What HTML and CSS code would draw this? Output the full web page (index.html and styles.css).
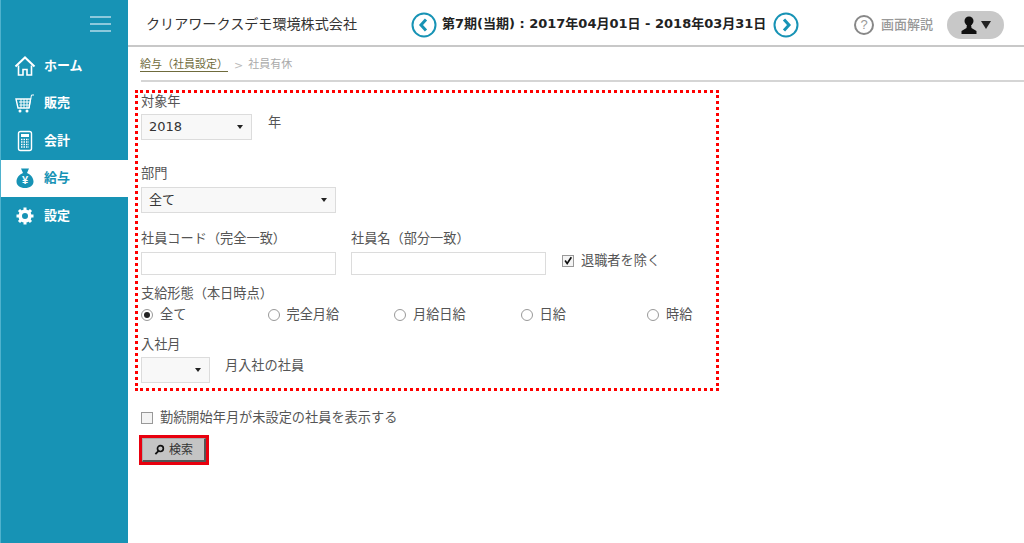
FILE: index.html
```html
<!DOCTYPE html>
<html lang="ja">
<head>
<meta charset="utf-8">
<title>社員有休</title>
<link rel="stylesheet" href="styles.css">
</head>
<body>
<div class="app">
  <aside class="side">
    <div class="burger"><span></span><span></span><span></span></div>
    <nav class="menu">
      <a class="item">
        <svg class="ico" viewBox="0 0 22 22"><path d="M1.500 11.500 11 2.500l9.500 9" fill="none" stroke="#fff" stroke-width="2"/><path d="M4.500 10.500V20h4.500v-5.500h4V20h4.500v-9.500" fill="none" stroke="#fff" stroke-width="1.600"/></svg>
        <span>ホーム</span>
      </a>
      <a class="item">
        <svg class="ico" viewBox="0 0 22 22"><path d="M2 7h14.500l-1.500 9H4z" fill="none" stroke="#fff" stroke-width="1.400"/><path d="M5 10h10.500M5.500 13h9.500M7 7v9M10 7v9M13 7v9M15 16l2.500-13H20" fill="none" stroke="#fff" stroke-width="1"/><circle cx="6" cy="19" r="1.500" fill="#fff"/><circle cx="13" cy="19" r="1.500" fill="#fff"/></svg>
        <span>販売</span>
      </a>
      <a class="item">
        <svg class="ico" viewBox="0 0 22 22"><rect x="4.500" y="1.500" width="13" height="19" rx="2" fill="none" stroke="#fff" stroke-width="1.400"/><rect x="7" y="4" width="8" height="3" fill="#fff"/><path d="M7 9.500h8M7 12h8M7 14.500h8M7 17h8" stroke="#fff" stroke-width="1.300" stroke-dasharray="1.500 1"/></svg>
        <span>会計</span>
      </a>
      <a class="item active">
        <svg class="ico" viewBox="0 0 22 22"><path d="M7 1.500h8l-2 4.500c4 1.500 6.500 5 6.500 8.500 0 4-3.500 6.500-8.500 6.500s-8.500-2.500-8.500-6.500c0-3.500 2.500-7 6.500-8.500z" fill="#1793b5"/><text x="11" y="17" class="yen">¥</text></svg>
        <span>給与</span>
      </a>
      <a class="item">
        <svg class="ico" viewBox="0 0 22 22"><circle cx="11" cy="11" r="4.800" fill="none" stroke="#fff" stroke-width="3.600"/><path d="M11 2.500v3M11 16.500v3M2.500 11h3M16.500 11h3M5 5l2.100 2.100M14.900 14.900 17 17M17 5l-2.100 2.100M7.100 14.900 5 17" stroke="#fff" stroke-width="3"/></svg>
        <span>設定</span>
      </a>
    </nav>
  </aside>
  <div class="main">
    <header class="top">
      <div class="company">クリアワークスデモ環境株式会社</div>
      <div class="period">
        <svg class="arrow" viewBox="0 0 26 26"><circle cx="13" cy="13" r="11.500" fill="#fff" stroke="#1793b5" stroke-width="2"/><path d="M15 7.500 10 13l5 5.500" fill="none" stroke="#1793b5" stroke-width="3"/></svg>
        <span class="period-text">第7期(当期) : 2017年04月01日 - 2018年03月31日</span>
        <svg class="arrow next" viewBox="0 0 26 26"><circle cx="13" cy="13" r="11.500" fill="#fff" stroke="#1793b5" stroke-width="2"/><path d="M11 7.500 16 13l-5 5.500" fill="none" stroke="#1793b5" stroke-width="3"/></svg>
      </div>
      <div class="help">
        <span class="qmark">?</span>
        <span>画面解説</span>
      </div>
      <div class="user">
        <svg class="user-ico" viewBox="0 0 16 18"><circle cx="8" cy="5" r="4.500" fill="#111"/><path d="M6 8h4l.5 4 5 3v3H.5v-3l5-3z" fill="#111"/></svg>
        <span class="user-caret"></span>
      </div>
    </header>
    <div class="crumbs">
      <a class="crumb-link">給与（社員設定）</a>
      <span class="crumb-sep">&gt;</span>
      <span class="crumb-now">社員有休</span>
    </div>
    <section class="filter">
      <div class="label">対象年</div>
      <div class="row year-row">
        <div class="select w-year"><span>2018</span><i class="caret"></i></div>
        <span class="unit year-unit">年</span>
      </div>
      <div class="label">部門</div>
      <div class="select w-dept"><span>全て</span><i class="caret"></i></div>
      <div class="two">
        <div class="col">
          <div class="label">社員コード（完全一致）</div>
          <div class="input"></div>
        </div>
        <div class="col">
          <div class="label">社員名（部分一致）</div>
          <div class="input"></div>
        </div>
        <label class="check retired"><i class="box"><svg viewBox="0 0 12 12"><path d="M2.500 5.500 5 9l5-7.500" fill="none" stroke="#111" stroke-width="2"/></svg></i>退職者を除く</label>
      </div>
      <div class="label pay-label">支給形態（本日時点）</div>
      <div class="radios">
        <label class="radio"><i class="dot on"></i>全て</label>
        <label class="radio"><i class="dot"></i>完全月給</label>
        <label class="radio"><i class="dot"></i>月給日給</label>
        <label class="radio"><i class="dot"></i>日給</label>
        <label class="radio"><i class="dot"></i>時給</label>
      </div>
      <div class="label join-label">入社月</div>
      <div class="row join-row">
        <div class="select w-month"><span></span><i class="caret"></i></div>
        <span class="unit join-unit">月入社の社員</span>
      </div>
    </section>
    <label class="check unset"><i class="box"></i>勤続開始年月が未設定の社員を表示する</label>
    <div class="btn-ring">
      <div class="btn">
        <svg class="lens" viewBox="0 0 12 12"><circle cx="7" cy="5" r="3.200" fill="none" stroke="#111" stroke-width="1.800"/><path d="M5 7.500 1.500 11" stroke="#111" stroke-width="2"/></svg>
        <span>検索</span>
      </div>
    </div>
  </div>
</div>
</body>
</html>
```
FILE: styles.css
```css
* { box-sizing: border-box; }
html, body { margin: 0; height: 100%; overflow: hidden; }
body {
  background: #fff;
  color: #555;
  font: 13.200px/18px "DejaVu Sans", "Noto Sans CJK JP", sans-serif;
}
.app { display: flex; height: 543px; }

/* sidebar */
.side {
  width: 128px;
  flex: none;
  background: #1793b5;
  border-left: 1px solid #4fb2cd;
}
.burger {
  height: 47px;
  padding: 16px 17px 0 89px;
  display: flex;
  flex-direction: column;
  gap: 5px;
}
.burger span { display: block; height: 2px; width: 21px; background: #8cc9dc; }
.menu { display: flex; flex-direction: column; }
.item {
  height: 37.500px;
  display: flex;
  align-items: center;
  gap: 8px;
  padding: 0 0 0 13px;
  color: #fff;
  font-size: 13px;
  font-weight: 700;
}
.item.active { background: #fff; color: #1793b5; }
.ico { width: 22px; height: 22px; flex: none; }
.yen { fill: #fff; font-size: 11px; font-weight: 700; text-anchor: middle; font-family: "Liberation Sans", sans-serif; }

/* header */
.main { flex: 1; min-width: 0; }
.top {
  height: 47px;
  border-bottom: 2px solid #c8c8c8;
  display: flex;
  align-items: center;
  padding: 2px 20px 0 18px;
}
.company { width: 265px; flex: none; font-size: 14.100px; color: #333; }
.period { display: flex; align-items: center; gap: 5px; width: 392px; flex: none; }
.arrow { width: 26px; height: 26px; flex: none; margin-top: 2px; }
.arrow.next { margin-left: 2px; }
.period-text { font-size: 13px; font-weight: 700; color: #222; white-space: nowrap; margin-top: 1px; }
.help { display: flex; align-items: center; gap: 7px; margin-left: 51px; margin-top: 2px; font-size: 13px; font-weight: 500; color: #999; white-space: nowrap; }
.qmark {
  width: 20px; height: 20px;
  border: 2px solid #888;
  border-radius: 50%;
  display: flex; align-items: center; justify-content: center;
  font: 13px/1 "Liberation Sans", sans-serif;
}
.user {
  margin-left: auto;
  margin-top: 2px;
  width: 57px; height: 28px;
  background: #c8c8c8;
  border-radius: 14px;
  display: flex;
  align-items: center;
  padding-left: 14px;
  gap: 4px;
}
.user-ico { width: 16px; height: 18px; }
.user-caret { border: 5px solid transparent; border-top: 8px solid #222; border-bottom: 0; }

/* breadcrumbs */
.crumbs {
  height: 35px;
  margin-left: 13px;
  border-bottom: 2px solid #d5d5d5;
  display: flex;
  align-items: center;
  font-size: 11px;
}
.crumb-link { color: #6f6b3c; border-bottom: 1px solid #6f6b3c; line-height: 13px; margin-top: 3px; margin-left: -1px; }
.crumb-sep { color: #bbb; margin: 4px 5px 0 6px; }
.crumb-now { color: #aaa; font-size: 11px; margin-top: 3px; }

/* filter box */
.filter {
  width: 584px;
  height: 301px;
  margin: 8px 0 0 7px;
  padding: 0 3px;
  border: 3px dotted #f00;
}
.label { height: 16px; line-height: 18px; color: #555; }
.row { display: flex; }
.select {
  height: 26px;
  border: 1px solid #dcdcdc;
  background: #f8f8f8;
  display: flex;
  align-items: center;
  justify-content: space-between;
  padding: 0 7px;
  color: #333;
  font-size: 13px;
}
.year-row { margin-top: 5px; height: 51px; }
.w-year { width: 111px; }
.w-dept { width: 195px; margin-top: 6px; }
.w-month { width: 69px; }
.caret { border: 3px solid transparent; border-top: 4px solid #222; border-bottom: 0; margin-right: 1px; }
.unit { line-height: 18px; color: #555; }
.year-unit { margin-left: 16px; }
.join-unit { margin-left: 15px; }

.two { display: flex; margin-top: 17px; }
.col { width: 195px; margin-right: 15px; }
.col .label { margin-bottom: 6px; }
.input { height: 23px; border: 1px solid #dcdcdc; background: #fff; }
.check { display: flex; align-items: center; gap: 7px; color: #555; }
.box {
  width: 12px; height: 12px;
  border: 1px solid #999;
  background: #f4f4f4;
  display: block;
  flex: none;
}
.box svg { display: block; width: 10px; height: 10px; }
.retired { margin-top: 22px; height: 18px; align-self: flex-start; margin-left: 1px; }
.pay-label { margin-top: 10px; }
.radios { display: grid; grid-template-columns: repeat(5, 126.500px); margin-top: 5px; height: 18px; }
.radio { display: flex; align-items: center; gap: 7px; }
.dot {
  width: 12px; height: 12px;
  border: 1px solid #999;
  border-radius: 50%;
  background: #fff;
  flex: none;
  position: relative;
}
.dot.on::after {
  content: "";
  position: absolute;
  inset: 2px;
  border-radius: 50%;
  background: #222;
}
.join-label { margin-top: 12px; }
.join-row { margin-top: 5px; }

.unset { margin: 18px 0 0 13px; height: 18px; }
.btn-ring {
  width: 70px; height: 30px;
  margin: 8px 0 0 11px;
  border: 3px solid #e8000e;
}
.btn {
  height: 24px;
  background: #c4c4c4;
  border: 1px solid #aaa;
  border-right: 2px solid #555;
  border-bottom: 2px solid #555;
  display: flex;
  align-items: center;
  justify-content: center;
  gap: 4px;
  font-size: 12px;
  color: #333;
}
.lens { width: 11px; height: 11px; }
```
